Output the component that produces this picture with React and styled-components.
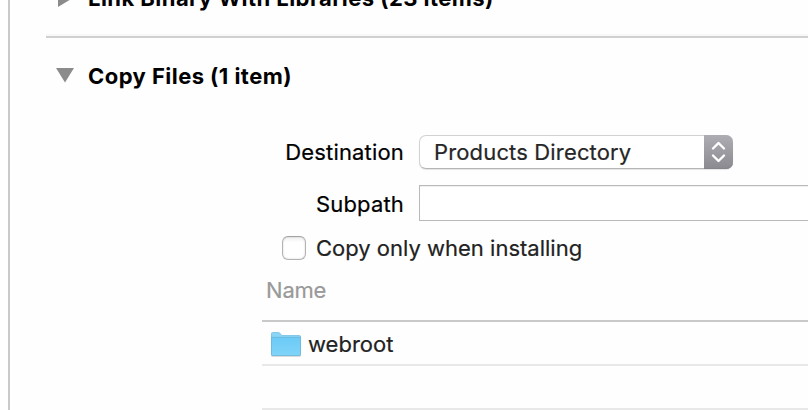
import React from "react";
import styled, { createGlobalStyle } from "styled-components";

const GlobalStyle = createGlobalStyle`
  *, *::before, *::after { box-sizing: border-box; }
  body { margin: 0; background: #fefefe; }
`;

const Page = styled.div`
  width: 808px;
  height: 410px;
  overflow: hidden;
  padding-left: 8px;
  display: flex;
  background: #fefefe;
  color: #000;
  font: 400 22px/26px Inter, "Noto Sans", sans-serif;
  -webkit-text-stroke: 0.2px currentColor;
  white-space: nowrap;
`;

const Panel = styled.main`
  flex: 1;
  min-width: 0;
  border-left: 2px solid #c9c9c9;
`;

const PhaseHeader = styled.header`
  display: flex;
  align-items: center;
  height: 26px;
  padding-left: 46px;
  margin-top: ${(p) => p.$top}px;
`;

const Disclosure = styled.svg`
  flex: none;
  width: 18px;
  height: 18px;
  margin-right: 14px;
  fill: #8b8b8b;
`;

const Label = styled.span`
  letter-spacing: ${(p) => p.$track || 0}px;
`;

const Title = styled.h2`
  margin: 0;
  font: inherit;
  font-weight: 700;
  letter-spacing: 0.45px;
  -webkit-text-stroke: 0;
`;

const Divider = styled.hr`
  margin: 23px 0 0 36px;
  height: 4px;
  border: 0;
  border-top: 2px solid #f8f8f8;
  background: #d0d0d0;
  background-clip: padding-box;
`;

const Form = styled.div`
  display: grid;
  grid-template-columns: 394px 1fr;
  column-gap: 15px;
  margin-top: 46px;
`;

const FieldLabel = styled.label`
  justify-self: end;
  padding-top: ${(p) => p.$pad}px;
  letter-spacing: 0.17px;
`;

const Select = styled.div`
  display: flex;
  width: 314px;
  height: 34px;
  margin-bottom: 16px;
  border: 1px solid #d2d2d2;
  border-bottom-color: #b5b5b5;
  border-right: 0;
  border-radius: 7px;
  background: #fff;
  color: #262626;
  box-shadow: 0 1px 1px rgba(0, 0, 0, 0.1);
`;

const SelectValue = styled.span`
  flex: 1;
  padding: 3px 0 0 14px;
  letter-spacing: 0.15px;
`;

const Stepper = styled.span`
  width: 29px;
  height: 34px;
  margin-top: -1px;
  border-radius: 0 7px 7px 0;
  background: linear-gradient(#aeadb3, #8b8a91);
  box-shadow: inset 0 -1px 0 #85848a;
`;

const Input = styled.div`
  height: 36px;
  border: 1px solid #b9b9b9;
  border-right: 0;
  background: #fff;
  box-shadow: inset 0 1px 0 #f0f0f0;
`;

const CheckRow = styled.div`
  display: flex;
  align-items: center;
  height: 26px;
  margin: 14px 0 0 272px;
  color: #222;
`;

const Checkbox = styled.span`
  width: 24px;
  height: 24px;
  margin-right: 10px;
  border: 1px solid #b3b3b3;
  border-top-color: #a2a2a2;
  border-radius: 6px;
  background: linear-gradient(#f0f0f0, #fff 25%);
  box-shadow: inset 0 0 2px rgba(0, 0, 0, 0.2);
`;

const Table = styled.section`
  margin: 16px 0 0 252px;
`;

const TableHead = styled.div`
  height: 45px;
  padding-left: 4px;
  border-bottom: 2px solid #c9c9c9;
  color: #999;
`;

const TableRow = styled.div`
  display: flex;
  align-items: flex-start;
  height: 44px;
  padding: 9px 0 0 8px;
  border-bottom: 2px solid #e8e8e8;
  color: #222;
`;

const Folder = styled.svg`
  flex: none;
  width: 32px;
  height: 26px;
  margin-right: 6px;
  overflow: visible;
  filter: drop-shadow(0 1px 0.5px rgba(0, 0, 0, 0.15));
`;

export default function App() {
  return (
    <>
      <GlobalStyle />
      <Page>
        <Panel>
          <PhaseHeader $top={-15}>
            <Disclosure viewBox="0 0 18 18">
              <path d="M2 1 16 9.5 2 18Z" />
            </Disclosure>
            <Title>Link Binary With Libraries (23 items)</Title>
          </PhaseHeader>
          <Divider />
          <PhaseHeader $top={25}>
            <Disclosure viewBox="0 0 18 18">
              <path d="M0 1H18L9 15.5Z" />
            </Disclosure>
            <Title>Copy Files (1 item)</Title>
          </PhaseHeader>
          <Form>
            <FieldLabel $pad={4}>Destination</FieldLabel>
            <Select>
              <SelectValue>Products Directory</SelectValue>
              <Stepper>
                <svg width="29" height="34" viewBox="0 0 29 34" fill="none" stroke="#fff" strokeWidth="2.4" strokeLinecap="round" strokeLinejoin="round">
                  <path d="M9 13.5 14.5 8 20 13.5M9 20.5 14.5 26 20 20.5" />
                </svg>
              </Stepper>
            </Select>
            <FieldLabel $pad={6}>Subpath</FieldLabel>
            <Input />
          </Form>
          <CheckRow>
            <Checkbox />
            <Label>Copy only when installing</Label>
          </CheckRow>
          <Table>
            <TableHead>
              <Label $track={-0.2}>Name</Label>
            </TableHead>
            <TableRow>
              <Folder viewBox="0 0 32 26">
                <defs>
                  <linearGradient id="folderFront" x1="0" y1="0" x2="0" y2="1">
                    <stop offset="0" stopColor="#6bcaf5" />
                    <stop offset="1" stopColor="#80d4f9" />
                  </linearGradient>
                </defs>
                <path d="M1.5 24V2.5Q1.5 1.5 2.5 1.5H8.5Q9.5 1.5 10 2.5L12 4.5H29.5Q30.5 4.5 30.5 5.5V24Z" fill="#8ad5f6" stroke="#73bfe2" strokeWidth=".8" />
                <path d="M1.5 6V23.5Q1.5 24.5 2.5 24.5H29.5Q30.5 24.5 30.5 23.5V6Z" fill="url(#folderFront)" />
                <path d="M1.5 6.3H30.5M1.5 6V23.5Q1.5 24.5 2.5 24.5H29.5Q30.5 24.5 30.5 23.5V6" fill="none" stroke="#65b5da" strokeWidth=".7" />
              </Folder>
              <Label>webroot</Label>
            </TableRow>
            <TableRow />
          </Table>
        </Panel>
      </Page>
    </>
  );
}
